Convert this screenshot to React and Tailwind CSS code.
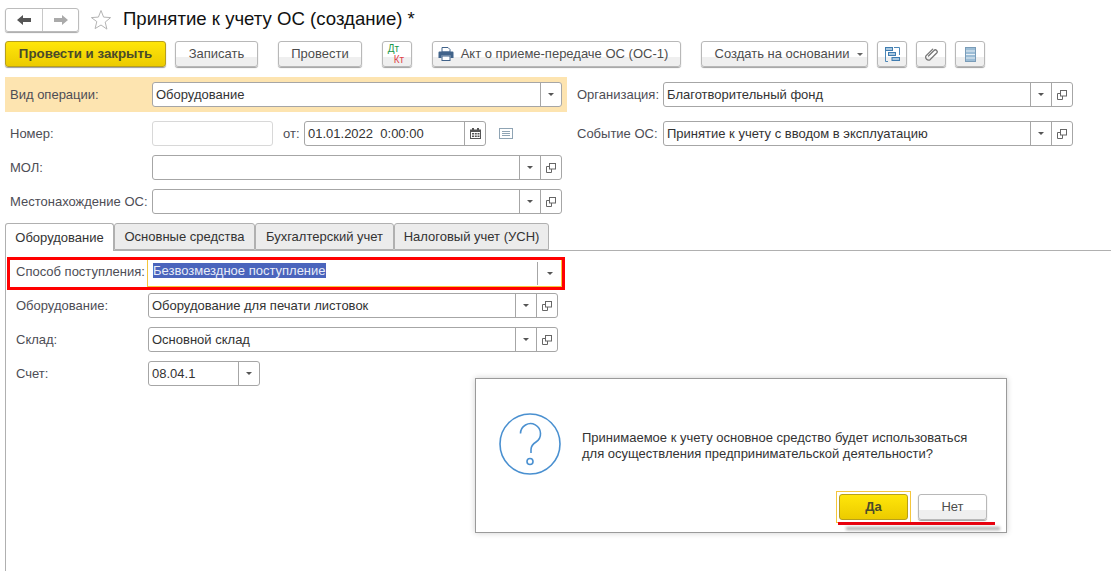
const font = { fontFamily: '"Liberation Sans", Arial, sans-serif' }

const Caret = () => (
  <svg width="6" height="3" viewBox="0 0 6 3"><path d="M0 0h6L3 3z" fill="#555" /></svg>
)

const OpenIcon = () => (
  <svg width="10" height="10" viewBox="0 0 10 10" fill="none" stroke="#666" strokeWidth="1">
    <rect x="3.5" y="0.5" width="6" height="5.5" fill="#fff" />
    <path d="M3.5 3.5H0.5V9.5H5.5V6" />
  </svg>
)

const Field = ({ w, value, caret = true, open = true, dim }) => (
  <div className={`flex h-[25px] shrink-0 rounded-[3px] border bg-white ${w} ${dim ? 'border-[#d8d8d8]' : 'border-[#a6a6a6]'}`}>
    <div className="flex-1 pl-[3px] leading-[24px] text-[#333] whitespace-pre">{value}</div>
    {caret && <div className="flex w-[21px] items-center justify-center border-l border-[#a6a6a6]"><Caret /></div>}
    {open && <div className="flex w-[21px] items-center justify-center border-l border-[#a6a6a6]"><OpenIcon /></div>}
  </div>
)

const Btn = ({ w, yellow, children, className = '' }) => (
  <div className={`flex h-[26px] shrink-0 items-center justify-center rounded-[3px] border ${w} ${className} ${yellow
    ? 'border-[#b79f1c] bg-gradient-to-b from-[#ffe60a] to-[#eccb00] text-[13.3px] font-bold text-[#4a4a2a] shadow-[0_1px_1px_#9a9a9a]'
    : 'border-[#b8b8b8] bg-[linear-gradient(#fff_0,#fff_62%,#efefef_62%,#efefef_100%)] text-[13px] text-[#4d4d4d] shadow-[0_1px_1px_#a0a0a0]'}`}>
    {children}
  </div>
)

const Label = ({ w, children }) => (
  <div className={`shrink-0 text-[#4d4d55] ${w}`}>{children}</div>
)

const Tab = ({ w, active, children }) => (
  <div className={`flex h-[27px] shrink-0 items-center justify-center rounded-t-[3px] border border-[#b0b0b0] ${w} ${active ? 'border-b-0 bg-white h-[28px] z-10' : 'bg-[#ececec]'}`}>
    {children}
  </div>
)

export default function App() {
  return (
    <div style={font} className="relative flex h-[571px] w-[1111px] flex-col overflow-hidden bg-white text-[13px] text-[#333]">
      {/* заголовок */}
      <div className="mt-[7px] ml-[5px] flex h-[25px] items-center">
        <div className="flex h-[24px] w-[74px] rounded-[3px] border border-[#bcbcbc] shadow-[0_1px_1px_#a8a8a8]">
          <div className="flex w-[37px] items-center justify-center border-r border-[#c8c8c8]">
            <svg width="14" height="10" viewBox="0 0 14 10"><path d="M0 5 6 0v3h8v4H6v3z" fill="#555" /></svg>
          </div>
          <div className="flex flex-1 items-center justify-center">
            <svg width="14" height="10" viewBox="0 0 14 10"><path d="M14 5 8 0v3H0v4h8v3z" fill="#aaa" /></svg>
          </div>
        </div>
        <svg className="ml-[11px]" width="22" height="22" viewBox="0 0 22 22" fill="none" stroke="#b4b4b4" strokeWidth="1">
          <path d="M11 1.5l2.6 6.6 7 .5-5.4 4.5 1.7 7L11 16l-5.9 3.6 1.7-7L1.4 8.6l7-.5z" />
        </svg>
        <div className="mb-[2px] ml-[11px] text-[18.6px] text-[#111]">Принятие к учету ОС (создание) *</div>
      </div>

      {/* кнопки */}
      <div className="mt-[9px] ml-[5px] flex">
        <Btn w="w-[161px]" yellow>Провести и закрыть</Btn>
        <Btn w="w-[83px]" className="ml-[9px]">Записать</Btn>
        <Btn w="w-[84px]" className="ml-[20px]">Провести</Btn>
        <Btn w="w-[30px]" className="ml-[20px]">
          <div className="flex flex-col text-[10px] leading-[11px]">
            <span className="ml-[-2px] text-[#1a9a4a]">Дт</span>
            <span className="ml-[4px] text-[#e0444a]">Кт</span>
          </div>
        </Btn>
        <Btn w="w-[249px]" className="ml-[20px] pr-[7px]">
          <svg className="mr-[7px]" width="16" height="14" viewBox="0 0 15 14">
            <path d="M3.5 0.5h6l2 2V5h-8z" fill="#fff" stroke="#41638a" />
            <path d="M0 5.5A1 1 0 0 1 1 4.5h13a1 1 0 0 1 1 1V11h-3V8.5H3V11H0z" fill="#41638a" />
            <rect x="3.5" y="9" width="8" height="4.5" fill="#fff" stroke="#41638a" />
          </svg>
          Акт о приеме-передаче ОС (ОС-1)
        </Btn>
        <Btn w="w-[167px]" className="ml-[20px] pl-[9px]">
          Создать на основании
          <span className="ml-[8px]"><svg width="6" height="3" viewBox="0 0 6 3"><path d="M0 0h6L3 3z" fill="#666" /></svg></span>
        </Btn>
        <Btn w="w-[30px]" className="ml-[9px]">
          <svg width="15" height="15" viewBox="0 0 15 15" fill="none">
            <path d="M.5 4v10.5H3M9 .5h5.5V8" stroke="#4d88b8" />
            <rect x="0.5" y="0.5" width="7" height="3" fill="#a9c8e0" stroke="#3f7cb0" />
            <rect x="3.5" y="5.5" width="7" height="3" fill="#a9c8e0" stroke="#3f7cb0" />
            <rect x="7" y="10.5" width="7.5" height="3" fill="#a9c8e0" stroke="#3f7cb0" />
          </svg>
        </Btn>
        <Btn w="w-[30px]" className="ml-[9px]">
          <svg width="14" height="15" viewBox="0 0 14 15" fill="none" stroke="#777" strokeWidth="1.3" strokeLinecap="round">
            <path d="M3.5 8.5 9 3a1.8 1.8 0 0 1 2.7 2.5L5 12.3a3 3 0 0 1-4-4L7.7 1.6" transform="translate(1 .5)" />
          </svg>
        </Btn>
        <Btn w="w-[30px]" className="ml-[9px]">
          <svg width="11" height="15" viewBox="0 0 11 15">
            <rect x="0.5" y="0.5" width="10" height="14" fill="#9cbdd6" stroke="#7a9cb8" />
            <path d="M1 4h9M1 7.5h9M1 11h9" stroke="#e8f0f6" />
          </svg>
        </Btn>
      </div>

      {/* шапка документа */}
      <div className="mt-[10px] ml-[5px] flex">
        <div className="w-[562px] shrink-0">
          <div className="flex h-[35px] items-center bg-[#fde4b0] pl-[5px]">
            <Label w="w-[142px]">Вид операции:</Label>
            <Field w="w-[410px]" value="Оборудование" open={false} />
          </div>
          <div className="mt-[9px] flex h-[25px] items-center pl-[5px]">
            <Label w="w-[142px]">Номер:</Label>
            <Field w="w-[121px]" value="" caret={false} open={false} dim />
            <div className="ml-[10px] w-[21px] text-[#4d4d55]">от:</div>
            <div className="flex h-[25px] w-[182px] shrink-0 rounded-[3px] border border-[#a6a6a6]">
              <div className="flex-1 pl-[3px] leading-[24px] whitespace-pre">01.01.2022  0:00:00</div>
              <div className="flex w-[21px] items-center justify-center border-l border-[#a6a6a6]">
                <svg width="11" height="11" viewBox="0 0 11 11">
                  <path d="M2 0h2v1.5h3V0h2v1.5h2V11H0V1.5h2z" fill="#555" />
                  <path d="M1 4h9v6H1z" fill="#fff" />
                  <path d="M2 5h2v1.5H2zM4.8 5h2v1.5h-2zM7.5 5h2v1.5h-2zM2 7.5h2V9H2zM4.8 7.5h2V9h-2zM7.5 7.5h2V9h-2z" fill="#555" />
                </svg>
              </div>
            </div>
            <svg className="ml-[13px]" width="14" height="11" viewBox="0 0 14 11" fill="none" stroke="#8fa4b4">
              <rect x="0.5" y="0.5" width="13" height="10" />
              <path d="M3 3.5h8M3 5.5h8M3 7.5h8" />
            </svg>
          </div>
          <div className="mt-[9px] flex h-[25px] items-center pl-[5px]">
            <Label w="w-[142px]">МОЛ:</Label>
            <Field w="w-[410px]" value="" />
          </div>
          <div className="mt-[9px] flex h-[25px] items-center pl-[5px]">
            <Label w="w-[142px]">Местонахождение ОС:</Label>
            <Field w="w-[410px]" value="" />
          </div>
        </div>
        <div className="ml-[10px] pt-[5px]">
          <div className="flex h-[25px] items-center">
            <Label w="w-[86px]">Организация:</Label>
            <Field w="w-[410px]" value="Благотворительный фонд" />
          </div>
          <div className="mt-[14px] flex h-[25px] items-center">
            <Label w="w-[86px]">Событие ОС:</Label>
            <Field w="w-[410px]" value="Принятие к учету с вводом в эксплуатацию" />
          </div>
        </div>
      </div>

      {/* вкладки */}
      <div className="mt-[9px] ml-[5px] flex h-[28px] border-b border-[#b0b0b0]">
        <Tab w="w-[109px]" active>Оборудование</Tab>
        <Tab w="w-[141px]">Основные средства</Tab>
        <Tab w="w-[139px]">Бухгалтерский учет</Tab>
        <Tab w="w-[155px]">Налоговый учет (УСН)</Tab>
      </div>

      <div className="ml-[5px] flex-1 border-l border-[#b0b0b0]">
        <div className="mt-[6px] ml-[1px] flex h-[33px] w-[558px] items-center border-[3px] border-[#ff0000] pl-[6px]">
          <Label w="w-[131px] pb-[4px]">Способ поступления:</Label>
          <div className="flex h-[27px] flex-1 items-center border-x border-b border-[#f5c63c] bg-white pl-[5px]">
            <span className="flex-1 pb-[4px]"><span className="bg-[#4a64bc] text-[#e8ecf8]">Безвозмездное поступление</span></span>
            <div className="flex h-[23px] w-[24px] items-center justify-center border-l border-[#a6a6a6]"><Caret /></div>
          </div>
        </div>
        <div className="mt-[3px] flex h-[25px] items-center pl-[10px]">
          <Label w="w-[132px]">Оборудование:</Label>
          <Field w="w-[410px]" value="Оборудование для печати листовок" />
        </div>
        <div className="mt-[9px] flex h-[25px] items-center pl-[10px]">
          <Label w="w-[132px]">Склад:</Label>
          <Field w="w-[410px]" value="Основной склад" />
        </div>
        <div className="mt-[9px] flex h-[25px] items-center pl-[10px]">
          <Label w="w-[132px]">Счет:</Label>
          <Field w="w-[112px]" value="08.04.1" open={false} />
        </div>
      </div>

      {/* вопрос */}
      <div className="absolute top-[378px] left-[475px] flex h-[155px] w-[532px] flex-col border border-[#9a9a9a] bg-white shadow-[0_0_6px_#cfcfcf]">
        <div className="flex items-start pt-[34px] pl-[23px]">
          <svg width="62" height="62" viewBox="0 0 62 62" fill="none" stroke="#4a90d0" strokeWidth="1.6">
            <circle cx="31" cy="31" r="30" />
            <path d="M21.5 20.5a10 10 0 1 1 15.5 8.5c-3 2-5 3.5-5 7.5v3.5" />
            <circle cx="31" cy="48.5" r="3" />
          </svg>
          <div className="ml-[21px] mt-[17px] text-[13px] leading-[16px] text-[#333]">
            Принимаемое к учету основное средство будет использоваться<br />
            для осуществления предпринимательской деятельности?
          </div>
        </div>
        <div className="absolute top-[112px] left-[360px] border border-[#f5c63c] p-[2px]">
          <div className="flex h-[26px] w-[69px] items-center justify-center rounded-[3px] border border-[#b79f1c] bg-gradient-to-b from-[#ffe60a] to-[#eccb00] font-bold text-[#4a4a2a]">Да</div>
        </div>
        <Btn w="w-[69px]" className="absolute top-[115px] left-[442px]">Нет</Btn>
        <div className="absolute top-[143px] left-[362px] h-[3px] w-[157px] bg-[#e8000e]" />
        <div className="absolute top-[148px] left-[370px] h-[3px] w-[154px] bg-[#aaa] blur-[1.5px]" />
      </div>
    </div>
  )
}
